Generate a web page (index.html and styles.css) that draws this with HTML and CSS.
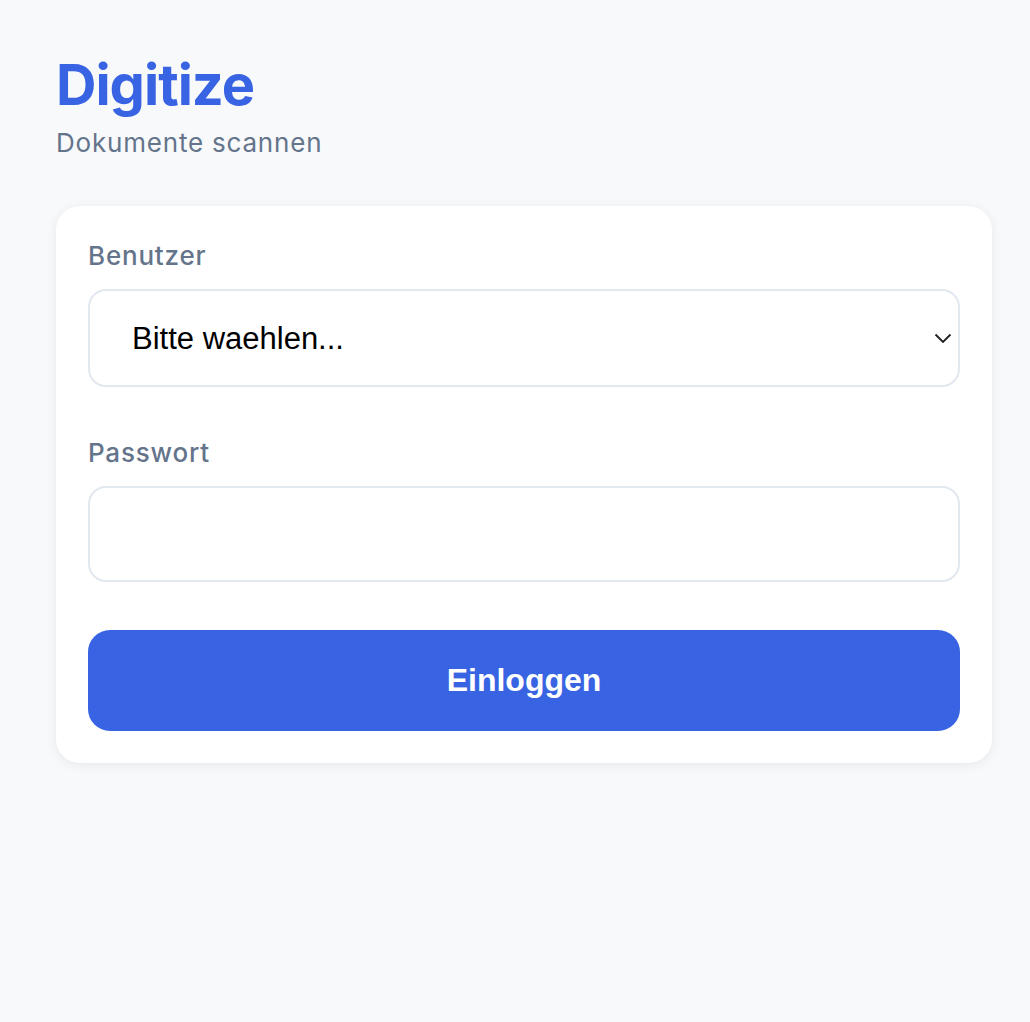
FILE: index.html
```html
<!DOCTYPE html>
<html lang="de">
<head>
    <meta charset="UTF-8">
    <meta name="viewport" content="width=device-width, initial-scale=1.0">
    <title>Digitize - Login</title>
    <link rel="stylesheet" href="styles.css">
</head>
<body>
    <div class="page">
        <header class="header">
            <h1 class="logo">Digitize</h1>
            <p class="subtitle">Dokumente scannen</p>
        </header>

        <form class="login-card" id="login-form">
            <div class="form-group">
                <label class="form-label" for="user">Benutzer</label>
                <div class="select-wrap">
                    <select id="user" class="form-select">
                        <option value="">Bitte waehlen...</option>
                    </select>
                    <svg class="select-arrow" width="18" height="10" viewBox="0 0 18 10" aria-hidden="true">
                        <path d="M1.5 1.5l7.5 7.5 7.5-7.5" fill="none" stroke="#1f1f1f" stroke-width="1.8"/>
                    </svg>
                </div>
            </div>

            <div class="form-group">
                <label class="form-label" for="password">Passwort</label>
                <input type="password" id="password" class="form-input">
            </div>

            <button type="submit" class="login-btn">Einloggen</button>
        </form>
    </div>
</body>
</html>
```

FILE: styles.css
```css
* {
    margin: 0;
    padding: 0;
    box-sizing: border-box;
}

body {
    font-family: Inter, 'Noto Sans', sans-serif;
    background: #f8f9fb;
    min-height: 100vh;
}

.page {
    padding: 53px 38px 56px 56px;
}

.header {
    margin-bottom: 47px;
}

.logo {
    font-size: 56px;
    font-weight: 700;
    color: #3863e3;
    letter-spacing: -1px;
    line-height: 64px;
}

.subtitle {
    color: #64748b;
    font-size: 26px;
    line-height: 32px;
    letter-spacing: 0.8px;
    margin-top: 10px;
}

.login-card {
    background: white;
    border-radius: 24px;
    padding: 32px;
    box-shadow: 0 2px 12px rgba(0, 0, 0, 0.07);
}

.form-group {
    margin-bottom: 48px;
}

.form-label {
    display: block;
    color: #64748b;
    font-size: 26px;
    font-weight: 500;
    line-height: 36px;
    letter-spacing: 0.8px;
    margin-bottom: 15px;
}

.select-wrap {
    position: relative;
}

.form-select,
.form-input {
    width: 100%;
    border: 2px solid #e2e8f0;
    border-radius: 18px;
    background: white;
    font-family: 'Liberation Sans', Arial, sans-serif;
    font-size: 31px;
    color: #000;
    outline: none;
}

.form-select {
    height: 98px;
    padding: 0 40px 0 42px;
    appearance: none;
    -webkit-appearance: none;
}

.form-input {
    height: 96px;
    padding: 0 40px;
}

.select-arrow {
    position: absolute;
    right: 8px;
    top: 50%;
    transform: translateY(-50%);
}

.login-btn {
    display: block;
    width: 100%;
    height: 101px;
    background: #3863e3;
    color: white;
    border: none;
    border-radius: 22px;
    font-family: 'Liberation Sans', Arial, sans-serif;
    font-size: 32px;
    font-weight: 700;
    cursor: pointer;
}
```
